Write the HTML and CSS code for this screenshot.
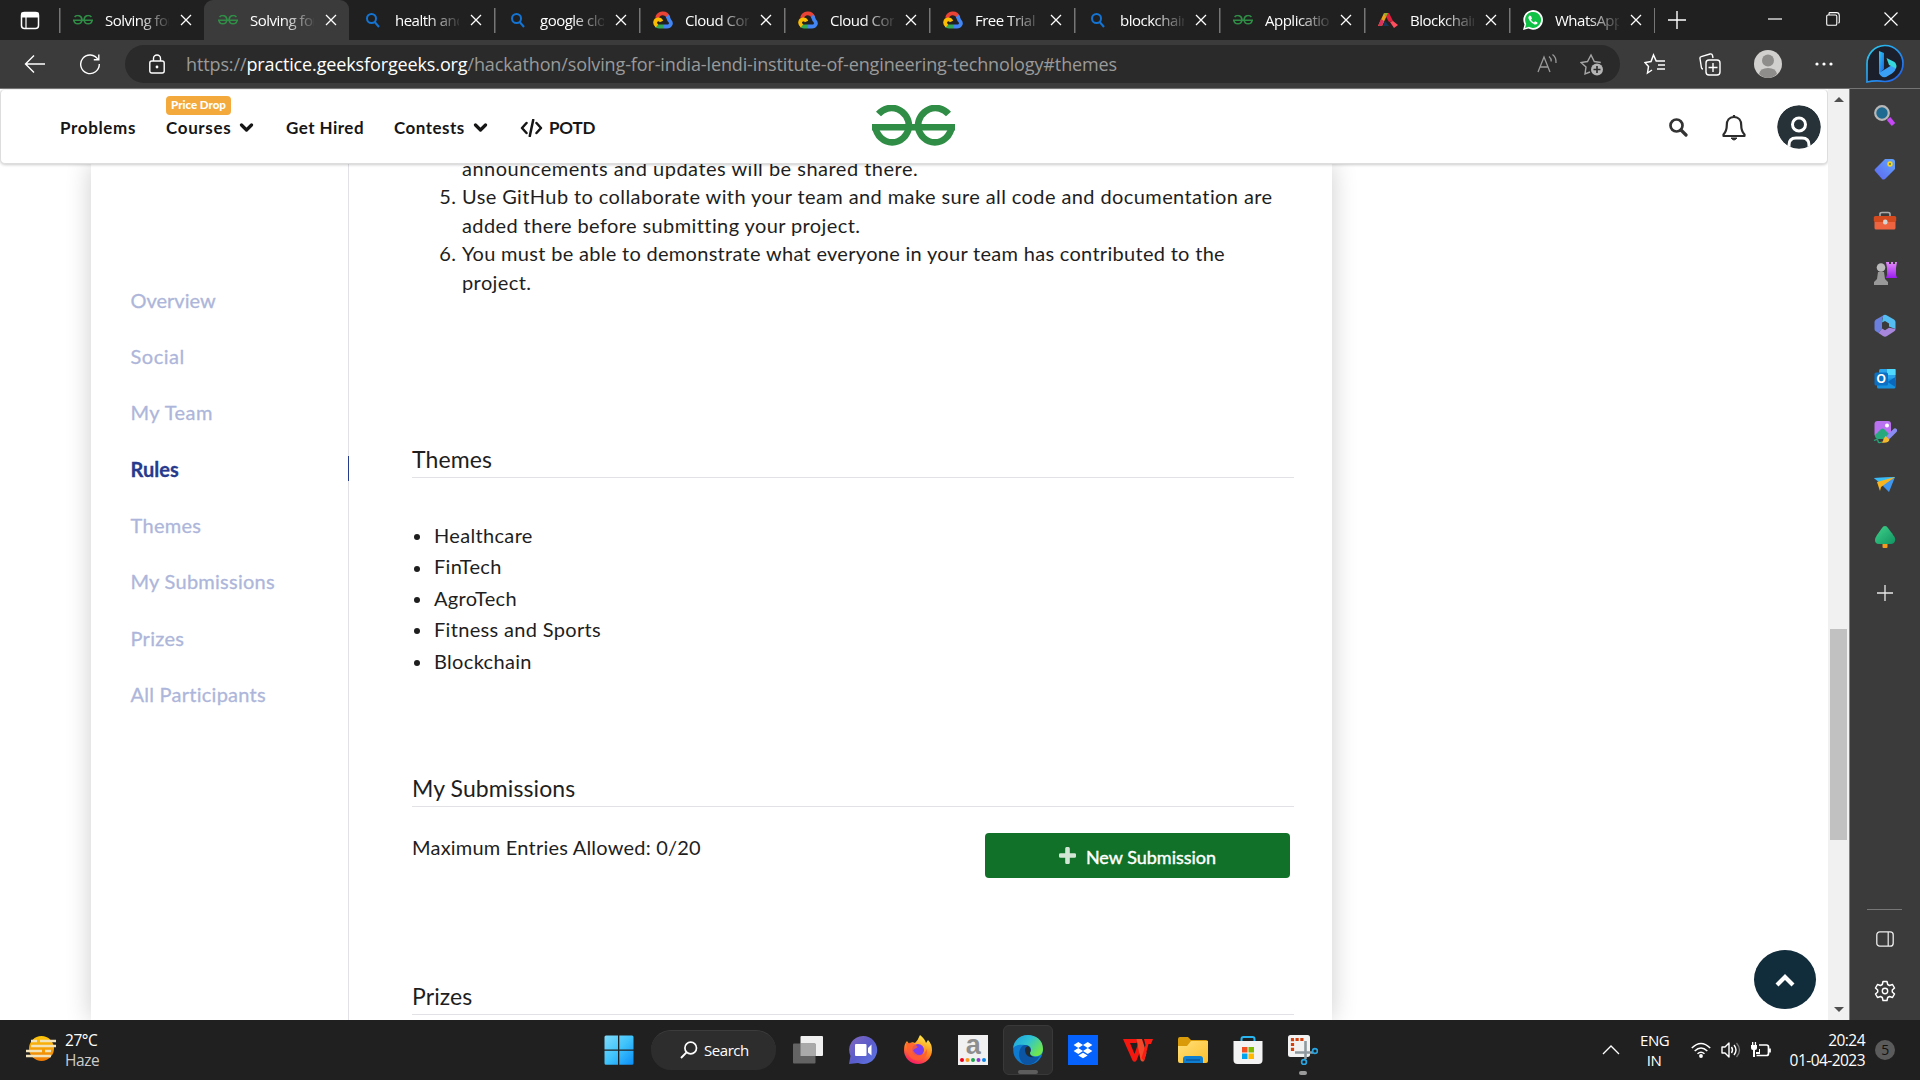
FILE: index.html
```html
<!DOCTYPE html>
<html lang="en">
<head>
<meta charset="utf-8">
<title>Solving for India</title>
<link rel="stylesheet" href="styles.css">
</head>
<body>
<svg class="defs" width="0" height="0" aria-hidden="true">
  <defs>
    <linearGradient id="gWin" x1="0" y1="0" x2="1" y2="1"><stop offset="0" stop-color="#7fdcfb"/><stop offset=".5" stop-color="#3fc3fb"/><stop offset="1" stop-color="#0a8df5"/></linearGradient>
    <linearGradient id="gSun" x1="0" y1="0" x2="0" y2="1"><stop offset="0" stop-color="#fdc60a"/><stop offset="1" stop-color="#ee7a05"/></linearGradient>
    <linearGradient id="gPurple" x1="0" y1="0" x2="0" y2="1"><stop offset="0" stop-color="#e58bfa"/><stop offset="1" stop-color="#9a1cf0"/></linearGradient>
    <linearGradient id="gBing" x1="0" y1="0" x2="1" y2="1"><stop offset="0" stop-color="#2ad0f0"/><stop offset="1" stop-color="#2158e8"/></linearGradient>
    <linearGradient id="gTag" x1="1" y1="0" x2="0" y2="1"><stop offset="0" stop-color="#62a6fb"/><stop offset="1" stop-color="#5d66f2"/></linearGradient>
    <linearGradient id="gTree" x1="0" y1="0" x2="1" y2="1"><stop offset="0" stop-color="#40d38b"/><stop offset="1" stop-color="#119462"/></linearGradient>
    <linearGradient id="gEdgeTop" x1="0" y1="0" x2="1" y2=".6"><stop offset="0" stop-color="#1d9fe0"/><stop offset=".5" stop-color="#2fc3d3"/><stop offset="1" stop-color="#70e64c"/></linearGradient>
    <linearGradient id="gFolder" x1="0" y1="0" x2="1" y2="1"><stop offset="0" stop-color="#ffe07a"/><stop offset="1" stop-color="#fcbf2c"/></linearGradient>
    <linearGradient id="gFox" x1=".7" y1="0" x2=".3" y2="1"><stop offset="0" stop-color="#fff04a"/><stop offset=".5" stop-color="#ff8a1c"/><stop offset="1" stop-color="#f5156c"/></linearGradient>
    <linearGradient id="gChat" x1="0" y1="0" x2="1" y2="1"><stop offset="0" stop-color="#8568bd"/><stop offset=".5" stop-color="#5a5ccb"/><stop offset="1" stop-color="#5f78e6"/></linearGradient>
    <symbol id="close" viewBox="0 0 12 12"><path d="M1 1l10 10M11 1L1 11" fill="none" stroke="#fff" stroke-width="1.3"/></symbol>
    <symbol id="gfg" viewBox="0 0 83 43"><g fill="none" stroke="#2f8d46" stroke-width="6.6"><path d="M76.500 9A17.500 18.300 0 0 0 46 21.500A17 18.300 0 0 0 79.700 21.500"/><path d="M6.500 9A17.500 18.300 0 0 1 37 21.500A17 18.300 0 0 1 3.300 21.500"/><path d="M0 22.300H83"/></g></symbol>
    <symbol id="find" viewBox="0 0 20 20"><g fill="none" stroke="#1474d4" stroke-width="2"><circle cx="8.500" cy="8.500" r="4.500"/><path d="M11.700 12l4.300 5"/></g></symbol>
    <symbol id="cloud" viewBox="0 0 20 17"><g fill="none" stroke-width="3.800"><path d="M4 6.500C5.500 1 13 0 15.500 6" stroke="#ea4335"/><path d="M14 4.500C16 6 15.500 8 16.500 9C19.500 12 17 15 14 15H10" stroke="#4285f4"/><path d="M10 15H6C5 15 4 14.800 3.200 14" stroke="#34a853"/><path d="M4 14.500C1 12 1.800 8.500 5 8C7 7.600 8 9 8.500 10" stroke="#fbbc04"/></g></symbol>
    <symbol id="chev" viewBox="0 0 14 10"><path d="M2 2l5 5 5-5" fill="none" stroke="#161616" stroke-width="3.200" stroke-linecap="round" stroke-linejoin="round"/></symbol>
  </defs>
</svg>

<header class="tabs">
  <div class="tab-actions"><svg width="20" height="20" viewBox="0 0 20 20"><rect x="1.500" y="2.500" width="17" height="16" rx="3" fill="none" stroke="#fff" stroke-width="1.500"/><path d="M2 3h16v4H2zM6 7v11" stroke="#fff" stroke-width="1.200" fill="#fff"/></svg></div>
  <div class="tab"><svg class="fav" viewBox="0 0 83 43"><use href="#gfg"/></svg><span class="title">Solving for</span><svg class="x"><use href="#close"/></svg></div>
  <div class="tab active"><svg class="fav" viewBox="0 0 83 43"><use href="#gfg"/></svg><span class="title">Solving for</span><svg class="x"><use href="#close"/></svg></div>
  <div class="tab"><svg class="fav"><use href="#find"/></svg><span class="title">health and</span><svg class="x"><use href="#close"/></svg></div>
  <div class="tab"><svg class="fav"><use href="#find"/></svg><span class="title">google clo</span><svg class="x"><use href="#close"/></svg></div>
  <div class="tab"><svg class="fav"><use href="#cloud"/></svg><span class="title">Cloud Con</span><svg class="x"><use href="#close"/></svg></div>
  <div class="tab"><svg class="fav"><use href="#cloud"/></svg><span class="title">Cloud Con</span><svg class="x"><use href="#close"/></svg></div>
  <div class="tab"><svg class="fav"><use href="#cloud"/></svg><span class="title">Free Trial a</span><svg class="x"><use href="#close"/></svg></div>
  <div class="tab"><svg class="fav"><use href="#find"/></svg><span class="title">blockchain</span><svg class="x"><use href="#close"/></svg></div>
  <div class="tab"><svg class="fav" viewBox="0 0 83 43"><use href="#gfg"/></svg><span class="title">Application</span><svg class="x"><use href="#close"/></svg></div>
  <div class="tab"><svg class="fav" viewBox="0 0 20 18"><path d="M0 15L6 2h4L4 15z" fill="#e8a31c"/><path d="M0 15l3-7 3 2-2 5z" fill="#d9305c"/><path d="M6 2h5l4 8-4 1z" fill="#e01f3c"/><path d="M6 2h4l-2 4z" fill="#7dbb2c"/><path d="M7 10l4 5H5z" fill="#17365c"/><path d="M12 11l3-1 5 4-4 3z" fill="#ff4f5e"/></svg><span class="title">Blockchain</span><svg class="x"><use href="#close"/></svg></div>
  <div class="tab"><svg class="fav" viewBox="0 0 20 20"><path d="M0 20l1.500-5.500A9.800 9.800 0 1 1 5.500 18.500z" fill="#fff"/><path d="M2 18l1.200-4A8 8 0 1 1 6 16.800z" fill="#0fc144"/><path d="M6.500 5.500c-2 2-1 4 1.500 6.500s5 3.500 6.500 1.500l-.2-1.300-2.300-1-1 1.200c-1.300-.5-2.500-1.700-3-3l1-1-1-2.500z" fill="#fff"/></svg><span class="title">WhatsApp</span><svg class="x"><use href="#close"/></svg></div>
  <div class="newtab"><svg width="18" height="18" viewBox="0 0 18 18"><path d="M9 0v18M0 9h18" stroke="#fff" stroke-width="1.400"/></svg></div>
  <div class="winctl">
    <svg width="14" height="14" viewBox="0 0 14 14"><path d="M0 7h14" stroke="#fff" stroke-width="1.200"/></svg>
    <svg width="14" height="14" viewBox="0 0 14 14"><path d="M3 3V1.500Q3 .6 4 .6h6.500Q13.300.6 13.300 3.500V10q0 1-1 1M2 3h7.500q1.300 0 1.300 1.300V12q0 1.300-1.300 1.300H2Q.7 13.300.7 12V4.300Q.7 3 2 3z" fill="none" stroke="#fff" stroke-width="1.100"/></svg>
    <svg width="14" height="14" viewBox="0 0 14 14"><path d="M.5.5l13 13M13.500.5l-13 13" stroke="#fff" stroke-width="1.200"/></svg>
  </div>
</header>

<div class="toolbar">
  <svg class="back" width="22" height="20" viewBox="0 0 22 20"><path d="M21 10H2M10 1.500L1.500 10l8.500 8.500" fill="none" stroke="#fff" stroke-width="1.400"/></svg>
  <svg class="reload" width="22" height="22" viewBox="0 0 22 22"><path d="M19 6.500A9.300 9.300 0 1 0 20.300 11M19.800 1.500v5.200h-5" fill="none" stroke="#fff" stroke-width="1.400"/></svg>
  <div class="address">
    <svg class="lock" width="16" height="20" viewBox="0 0 16 20"><path d="M4.500 7V4.500a3.500 3.500 0 0 1 7 0V7" fill="none" stroke="#fff" stroke-width="1.400"/><rect x=".8" y="7" width="14.400" height="12" rx="2" fill="none" stroke="#fff" stroke-width="1.400"/><circle cx="8" cy="13" r="1.400" fill="#fff"/></svg>
    <div class="url">https://<b>practice.geeksforgeeks.org</b>/hackathon/solving-for-india-lendi-institute-of-engineering-technology#themes</div>
    <svg class="aloud" width="22" height="22" viewBox="0 0 22 22"><path d="M2 19L8 4l6 15M4 14h8M13 3.500q2.500 2 2.200 5M16.500 1.500q4 3 3.500 8.500" fill="none" stroke="#9a9a9a" stroke-width="1.300"/></svg>
    <svg class="star" width="24" height="24" viewBox="0 0 24 24"><path d="M10 20l-5 2 1-7-5-4.500 6.500-1L11 3l3.300 6.500 6.500 1" fill="none" stroke="#a5a5a5" stroke-width="1.400"/><circle cx="17" cy="17.500" r="6" fill="#b4b4b4"/><path d="M17 14v7M13.500 17.500h7" stroke="#2b2b2b" stroke-width="1.600"/></svg>
  </div>
  <div class="tools">
    <svg width="22" height="22" viewBox="0 0 22 22"><path d="M8 17l-4.500 3 1-6.500L1 9.500l6-1L9.500 2l2.700 6H21M14 12h7M13 16h8" fill="none" stroke="#fff" stroke-width="1.500"/></svg>
    <svg width="22" height="24" viewBox="0 0 22 24"><path d="M4 17q-1.300 0-1.600-1.500L1 6.500Q.7 5 2.200 4.600L11 2q2-.5 2.500 1.500L14 6" fill="none" stroke="#fff" stroke-width="1.400"/><rect x="7" y="8" width="14" height="15" rx="3" fill="none" stroke="#fff" stroke-width="1.400"/><path d="M14 11v9M9.500 15.500h9" stroke="#fff" stroke-width="1.400"/></svg>
    <svg width="28" height="28" viewBox="0 0 28 28"><circle cx="14" cy="14" r="14" fill="#d2d0ce"/><circle cx="14" cy="10.500" r="6" fill="#8f8d8b"/><path d="M5 24q1-6 9-6t9 6q-4 4-9 4t-9-4z" fill="#8f8d8b"/></svg>
    <svg width="18" height="6" viewBox="0 0 18 6"><circle cx="2" cy="3" r="1.600" fill="#fff"/><circle cx="9" cy="3" r="1.600" fill="#fff"/><circle cx="16" cy="3" r="1.600" fill="#fff"/></svg>
  </div>
  <svg class="bing" width="40" height="40" viewBox="0 0 40 40"><path d="M2 38V20A18 18 0 1 1 20 37.500Q10 36 2 38z" fill="#1b1f2b" stroke="url(#gBing)" stroke-width="1.700"/><path d="M14 7l5 2v16l-5 5z" fill="url(#gBing)"/><path d="M14 29l13-8 4 3q-1 4-4 5.500l-6 3.500q-5 1-7-4z" fill="#3aa0f6"/><path d="M21.500 14l8 4q3 3 1.500 6.500L24 21z" fill="#35d8dc"/></svg>
</div>

<div class="middle">
  <main class="page">
    <nav class="site">
      <div class="links">
        <a class="n1">Problems</a>
        <a class="n2"><span class="badge">Price Drop</span><span class="lbl">Courses</span><svg width="15" height="10"><use href="#chev"/></svg></a>
        <a class="n3">Get Hired</a>
        <a class="n4"><span class="lbl">Contests</span><svg width="15" height="10"><use href="#chev"/></svg></a>
        <a class="n5"><svg width="23" height="18" viewBox="0 0 23 18"><path d="M6.500 4L2 9l4.500 5M16.500 4L21 9l-4.500 5M13.200 1L9.800 17" fill="none" stroke="#161616" stroke-width="2.500" stroke-linecap="round" stroke-linejoin="round"/></svg>POTD</a>
      </div>
      <svg class="logo" width="83" height="43"><use href="#gfg"/></svg>
      <div class="user">
        <svg width="19" height="19" viewBox="0 0 19 19"><circle cx="7.500" cy="7.500" r="6" fill="none" stroke="#333" stroke-width="2.700"/><path d="M12 12l5 5" stroke="#333" stroke-width="3.200" stroke-linecap="round"/></svg>
        <svg width="24" height="27" viewBox="0 0 24 27"><path d="M12 1v2M12 3C7 3 4.800 7 4.800 11c0 5-1 7-3.300 9.500V22h21v-1.500C20 18 19.200 16 19.200 11c0-4-2.200-8-7.200-8z" fill="none" stroke="#2c2c2c" stroke-width="2.200" stroke-linejoin="round"/><path d="M9 24q3 4 6 0z" fill="#2c2c2c" stroke="#2c2c2c" stroke-width="1"/></svg>
        <svg width="44" height="44" viewBox="0 0 44 44"><clipPath id="avc"><circle cx="22" cy="22" r="21.800"/></clipPath><g clip-path="url(#avc)"><circle cx="22" cy="22" r="22" fill="#263238"/><circle cx="22" cy="19.500" r="6.500" fill="none" stroke="#fff" stroke-width="3"/><path d="M12 44v-4q0-7 7-7h6q7 0 7 7v4" fill="none" stroke="#fff" stroke-width="3"/></g></svg>
      </div>
    </nav>
    <div class="card">
      <aside class="menu">
        <a>Overview</a><a class="social">Social</a><a class="team">My Team</a><a class="current">Rules</a><a class="th">Themes</a><a class="sub">My Submissions</a><a class="pr">Prizes</a><a class="all">All Participants</a>
      </aside>
      <section class="body">
        <ol class="rules" start="4">
          <li class="partial"><span class="r4">announcements and updates will be shared there.</span></li>
          <li>Use GitHub to collaborate with your team and make sure all code and documentation are<br>added there before submitting your project.</li>
          <li><span class="r6">You must be able to demonstrate what everyone in your team has contributed to the</span><br>project.</li>
        </ol>
        <h2 class="h-themes">Themes</h2>
        <ul class="themes"><li>Healthcare</li><li>FinTech</li><li>AgroTech</li><li>Fitness and Sports</li><li>Blockchain</li></ul>
        <h2 class="h-sub">My Submissions</h2>
        <div class="entries">
          <p>Maximum Entries Allowed: 0/20</p>
          <button><svg width="17" height="17" viewBox="0 0 17 17"><path d="M6.200 1.500Q6.200 0 7.500 0h2q1.300 0 1.300 1.500v4.700h4.700q1.500 0 1.500 1.300v2q0 1.300-1.500 1.300h-4.700v4.700q0 1.500-1.300 1.500h-2q-1.300 0-1.300-1.500v-4.700H1.500Q0 10.800 0 9.500v-2q0-1.300 1.500-1.300h4.700z" fill="#d3e6d6"/></svg><span>New Submission</span></button>
        </div>
        <h2 class="h-prizes">Prizes</h2>
      </section>
    </div>
    <button class="totop"><svg width="20" height="14" viewBox="0 0 20 14"><path d="M2 12l8-8 8 8" fill="none" stroke="#fff" stroke-width="4.200"/></svg></button>
  </main>
  <div class="scroll"><i class="up"></i><i class="thumb"></i><i class="down"></i></div>
  <aside class="edgebar">
    <svg width="24" height="24" viewBox="0 0 24 24"><path d="M15.500 14.500l5 6" stroke="#c547f5" stroke-width="4.500"/><circle cx="9" cy="9" r="6.800" fill="#1f6a90" stroke="#b8b8b8" stroke-width="2.200"/></svg>
    <svg width="24" height="24" viewBox="0 0 24 24"><path d="M12 2h7q3 0 3 3v7L12 22q-2 1-3 0l-7-8q-1-1 0-2z" fill="url(#gTag)"/><circle cx="17" cy="7" r="1.800" fill="#473" stroke="#f7d51c" stroke-width="1.800"/></svg>
    <svg width="24" height="24" viewBox="0 0 24 24"><path d="M7 7V5q0-1.500 2-1.500h6q2 0 2 1.500v2" fill="none" stroke="#aaa" stroke-width="1.600"/><rect x="1.500" y="12" width="21" height="8.500" rx="1.500" fill="#ee6440"/><rect x=".8" y="7" width="22.400" height="6" rx="1.500" fill="#d24a1e"/><rect x="10" y="10.500" width="4.500" height="5" rx="2" fill="#d5d5d5"/></svg>
    <svg width="24" height="24" viewBox="0 0 24 24"><path d="M13 0h3v2h2V0h2v2h2V0h2l-1 6v7l1 3H13l1-3V6z" fill="url(#gPurple)"/><circle cx="8" cy="5.500" r="4.300" fill="#bababa"/><path d="M5 10h6l1 7 3 3v3H1v-3l3-3z" fill="#999"/></svg>
    <svg width="24" height="24" viewBox="0 0 24 24"><path d="M10 1.500q2-1.300 4 0L21 5.500q1.500 1 1.500 2.500v7L16 12.500V9.500L12 7l-3 1.500z" fill="#54bdf2"/><path d="M11 1L9 5v9.500L5.500 19 2.500 17q-1-.7-1-2V8q0-1.500 1.500-2.500z" fill="#6b80dc"/><path d="M5.500 19L9 14.500l3 1.700 4-2.500 6.500 1.300q0 1.500-1.500 2.500L14 22q-2 1.300-4 0z" fill="#a886dc"/></svg>
    <svg width="24" height="24" viewBox="0 0 24 24"><rect x="6" y="2" width="16.500" height="12" rx="1.500" fill="#2ba3ea"/><path d="M14 2h8.500v6H14z" fill="#50d9ff"/><path d="M4 13l18.500-2v9q0 1.500-1.500 1.500H5.500Q4 21.500 4 20z" fill="#1691df"/><path d="M22.500 10v10l-8-5z" fill="#0968bb"/><rect x="1.500" y="5.500" width="13.500" height="13" rx="1.500" fill="#0b70c4"/><text x="8.200" y="16" class="o">O</text></svg>
    <svg width="24" height="24" viewBox="0 0 24 24"><rect x="1.500" y="1" width="16.500" height="16" rx="3" fill="#bb72f0"/><path d="M2 15l6-6q1.500-1 3 0l6 6-3 4H5q-3 0-3-4z" fill="#27a97d"/><circle cx="14" cy="5.500" r="2" fill="#fff"/><path d="M1 20.500q4-2 4 .5t4 1" fill="none" stroke="#27a97d" stroke-width="1.300"/><path d="M22 10.500L15.500 17" stroke="#8b8df5" stroke-width="4.200" stroke-linecap="round"/><path d="M12.500 16l4 3.500q-1 4-8 3 2-1 2-3.500z" fill="#f5ba2c"/></svg>
    <svg width="24" height="24" viewBox="0 0 24 24"><path d="M1 6l21-1-6 15-6-6z" fill="#4196f0"/><path d="M1 6l21-1L9 12z" fill="#39bdf3"/><path d="M4 10l18-5L8 15l-1 4z" fill="#fab51e"/></svg>
    <svg width="24" height="24" viewBox="0 0 24 24"><rect x="9.500" y="16" width="5" height="7" rx="1" fill="#f39a1f"/><path d="M12 1q2 0 3 2l3 4q2 2 2 3 3 3 2 6-1 3-4 3H6q-4 0-4-4 0-2 2-5l5-7q1-2 3-2z" fill="url(#gTree)"/></svg>
    <svg class="add" width="16" height="16" viewBox="0 0 16 16"><path d="M8 0v16M0 8h16" stroke="#e8e8e8" stroke-width="1.300"/></svg>
    <hr>
    <svg class="panel" width="18" height="16" viewBox="0 0 18 16"><rect x=".8" y=".8" width="16.400" height="14.400" rx="3" fill="none" stroke="#eee" stroke-width="1.300"/><path d="M12.200 1v14" stroke="#eee" stroke-width="1.200"/></svg>
    <svg class="gear" width="22" height="22" viewBox="0 0 22 22"><path d="M9 1.500h4l.7 3 1.800 1 3-1 2 3.500-2.200 2v2l2.200 2-2 3.500-3-1-1.800 1-.7 3H9l-.7-3-1.800-1-3 1-2-3.500 2.200-2v-2L1.500 8l2-3.500 3 1 1.800-1z" fill="none" stroke="#fff" stroke-width="1.500" stroke-linejoin="round"/><circle cx="11" cy="11" r="2.700" fill="none" stroke="#fff" stroke-width="1.400"/></svg>
  </aside>
</div>

<footer class="taskbar">
  <div class="weather">
    <svg width="31" height="30" viewBox="0 0 31 30"><circle cx="15.500" cy="14.500" r="12.500" fill="url(#gSun)"/><g stroke="#f3e3ba" stroke-width="2.300"><path d="M5 7h6M14 7h16M5 12h25M0 17h16M19 17h6M0 22h25"/></g></svg>
    <div><b>27°C</b><span>Haze</span></div>
  </div>
  <div class="apps">
    <svg width="30" height="30" viewBox="0 0 30 30"><path d="M.5 2q0-1.500 1.500-1.500h12v14H.5zM15.300.5h12.700q1.500 0 1.500 1.500v12.500H15.300zM.5 15.700h13.500v14H2q-1.500 0-1.500-1.500zM15.300 15.700h14.200v12.500q0 1.500-1.500 1.500H15.300z" fill="url(#gWin)"/></svg>
    <div class="search"><svg width="18" height="18" viewBox="0 0 18 18"><circle cx="10.700" cy="7" r="5.800" fill="none" stroke="#fff" stroke-width="1.700"/><path d="M6.500 11.300L1 17" stroke="#fff" stroke-width="1.900"/></svg><span>Search</span></div>
    <svg width="30" height="30" viewBox="0 0 30 30"><rect x="7.500" y="1" width="22.500" height="20" rx="1" fill="#f0f0f0"/><rect x="0" y="8.500" width="22.500" height="20" rx="1" fill="#636363"/><rect x="7.500" y="8.500" width="15" height="12.500" fill="#aaa"/></svg>
    <svg width="30" height="30" viewBox="0 0 30 30"><path d="M15 1a14 14 0 1 1-5 27L1 29l1.500-8A14 14 0 0 1 15 1z" fill="url(#gChat)"/><rect x="7" y="9" width="11.500" height="12" rx="1" fill="#fff"/><path d="M20 13l3.500-3.500v11L20 17.500z" fill="#fff"/></svg>
    <svg width="30" height="30" viewBox="0 0 30 30"><path d="M15 29A14 14 0 0 1 1 15q0-6 3-9l2 3q3-3 6-1Q15 5 17 0q5 4 6 8l2-3q4 4 4 10a14 14 0 0 1-14 14z" fill="url(#gFox)"/><circle cx="15" cy="15" r="6" fill="#7a3df0"/><path d="M3 8q6-1 9 1l3 3-5 3q2 5 7 5 5-1 7-6 1 8-6 11-9 2-13-6z" fill="#ff5c32" opacity=".8"/></svg>
    <svg width="30" height="30" viewBox="0 0 30 30"><rect width="30" height="30" fill="#f1f1f1"/><text x="15" y="18.500" class="a">a</text><circle cx="4" cy="25" r="2" fill="#f00016"/><circle cx="9.500" cy="25" r="2" fill="#ff9a1a"/><circle cx="15" cy="25" r="2" fill="#19a64b"/><circle cx="20.500" cy="25" r="2" fill="#8f38cf"/><circle cx="26" cy="25" r="2" fill="#0785e8"/></svg>
    <div class="app on"><svg width="30" height="30" viewBox="0 0 30 30"><circle cx="15" cy="15" r="14.800" fill="#0e7ad0"/><path d="M0 14C1-5 30-4 30 14c0 6-5 8-9 7-3 0-5-2-4-4 2-2 1-7-5-7C5 9 1 11 0 14z" fill="url(#gEdgeTop)"/><path d="M12 10c5 0 7 4 5 7-1 3 2 5 5 5q3 0 5-1-5 9-14 8.800C3 26 5 11 12 10z" fill="#0c55a4"/><path d="M15 11q-5 2-2 8 3 4 8 3-4-1-4-4 2-4-2-7z" fill="#232b30"/></svg></div>
    <svg width="30" height="30" viewBox="0 0 30 30"><rect width="30" height="30" fill="#0562fc"/><path d="M10.300 7l4.700 3-4.700 3-4.700-3zM19.700 7l4.700 3-4.700 3-4.700-3zM10.300 13l4.700 3-4.700 3-4.700-3zM19.700 13l4.700 3-4.700 3-4.700-3zM15 17.700l4.700 2.800-4.700 2.800-4.700-2.800z" fill="#fff"/></svg>
    <svg width="30" height="30" viewBox="0 0 30 30"><path d="M0 4h15l-1.500 4H7l4.500 11L15 9l3.500 4-5 12.500q-2 2.500-4 0z" fill="#f3170f"/><path d="M13.500 4h5.500l4.500 14-2.500 8q-2 1.500-3.500-1z" fill="#f4482a"/><path d="M21 4h9l-2 5h-2.500L21 26l-2.500-3 4-13z" fill="#fb1d12"/></svg>
    <svg width="30" height="30" viewBox="0 0 30 30"><path d="M0 4q0-2 2-2h8l3 3h15q2 0 2 2v6H0z" fill="#d99b0a"/><path d="M0 11h9l4-5h17v20q0 2-2 2H2q-2 0-2-2z" fill="url(#gFolder)"/><path d="M5 28v-4q0-3 3-3h14q3 0 3 3v4z" fill="#0f7fd2"/><path d="M8 25h14" stroke="#0a4e8f" stroke-width="1.200"/></svg>
    <svg width="30" height="30" viewBox="0 0 30 30"><path d="M8.500 7V4q0-2 2-2h9q2 0 2 2v3" fill="none" stroke="#29b5ef" stroke-width="2"/><path d="M.5 6h29v19q0 4-4 4h-21q-4 0-4-4z" fill="#f3f3f3"/><path d="M9 12h5.500v5.500H9z" fill="#f25022"/><path d="M15.500 12H21v5.500h-5.500z" fill="#7fba00"/><path d="M9 18.500h5.500V24H9z" fill="#00a4ef"/><path d="M15.500 18.500H21V24h-5.500z" fill="#ffb900"/></svg>
    <div class="app snip"><svg width="30" height="30" viewBox="0 0 30 30"><rect width="22" height="22" rx="2.500" fill="#f2f2f2"/><path d="M15.500 4.500h-11v12" fill="none" stroke="#d43f0c" stroke-width="3.200" stroke-dasharray="3.200 1.600"/><path d="M17.500 6v18M7 17.500h18" stroke="#8e999f" stroke-width="2.600"/><circle cx="27" cy="16" r="2.400" fill="none" stroke="#27a5e2" stroke-width="1.700"/><circle cx="16" cy="27" r="2.400" fill="none" stroke="#27a5e2" stroke-width="1.700"/></svg></div>
  </div>
  <div class="tray">
    <svg class="more" width="18" height="10" viewBox="0 0 18 10"><path d="M1 9l8-8 8 8" fill="none" stroke="#fff" stroke-width="1.300"/></svg>
    <div class="lang"><span>ENG</span><span>IN</span></div>
    <svg class="wifi" width="20" height="16" viewBox="0 0 20 16"><path d="M.8 6q9.200-9 18.400 0M3.700 9q6.300-6 12.600 0M6.500 11.800q3.500-3.200 7 0" fill="none" stroke="#fff" stroke-width="1.500"/><circle cx="10" cy="14" r="1.900" fill="#fff"/></svg>
    <svg class="snd" width="20" height="18" viewBox="0 0 20 18"><path d="M1 6h3l4-4v14l-4-4H1z" fill="none" stroke="#fff" stroke-width="1.400" stroke-linejoin="round"/><path d="M10.500 6q2 3 0 6M13 4q4 5 0 10" fill="none" stroke="#fff" stroke-width="1.400"/><path d="M15.500 2q6 7 0 14" fill="none" stroke="#777" stroke-width="1.300"/></svg>
    <svg class="bat" width="20" height="16" viewBox="0 0 20 16"><path d="M8 3h7.500q2 0 2 2v6.500q0 2-2 2H5.500M19 6.500v4" fill="none" stroke="#fff" stroke-width="1.700"/><path d="M0 3h6v3q0 2-2 2v7H2V8Q0 8 0 6zM1 0h1.300v3H1zM3.800 0h1.300v3H3.800zM8 7h1v5H5v-2h3z" fill="#fff"/></svg>
    <div class="clock"><span>20:24</span><span>01-04-2023</span></div>
    <div class="count">5</div>
  </div>
</footer>
</body>
</html>
```
FILE: styles.css
```css
* { box-sizing: border-box; }
html, body { margin: 0; }
body { width: 1920px; height: 1080px; overflow: hidden; display: grid; grid-template-rows: 40px 49px 931px 60px; background: #fff; font-family: Lato, "Open Sans", sans-serif; }
svg { display: block; flex: none; }
.defs { position: absolute; }

.tabs { display: flex; background: #202020; color: #fff; font-family: "Open Sans", "Noto Sans", sans-serif; }
.tab-actions { width: 59px; padding: 10px 0 0 20px; }
.tab { width: 145px; height: 40px; display: flex; align-items: center; padding-left: 14px; background: linear-gradient(#767676, #767676) 0 8px / 1.500px 25px no-repeat; }
.tab .fav { width: 20px; height: 20px; }
.tab .title { width: 64px; margin-left: 12px; font-size: 15px; line-height: 20px; letter-spacing: -0.500px; white-space: nowrap; overflow: hidden; -webkit-mask-image: linear-gradient(90deg, #000 50%, rgba(0,0,0,.1)); mask-image: linear-gradient(90deg, #000 50%, rgba(0,0,0,.1)); }
.tab .x { width: 12px; height: 12px; margin-left: 11px; }
.tab.active, .tab.active + .tab { background: none; }
.tab.active { background: #3b3b3b; border-radius: 9px 9px 0 0; }
.newtab { width: 96px; padding: 3px 0 0 13px; border-left: 1.500px solid #767676; height: 25px; margin-top: 8px; }
.winctl { display: flex; gap: 44px; padding: 12px 0 0 18px; }

.toolbar { display: flex; align-items: center; background: #3b3b3b; padding: 0 14px 0 24px; border-bottom: 1px solid #747474; }
.reload { margin-left: 33px; }
.address { flex: none; width: 1495px; height: 38px; margin-left: 24px; display: flex; align-items: center; background: #2a2a2a; border-radius: 19px; padding-left: 24px; }
.url { flex: none; width: 1330px; margin-left: 21px; color: #9a9a9a; font: 18px/26px "Open Sans", "Noto Sans", sans-serif; letter-spacing: -0.127px; white-space: nowrap; }
.url b { font-weight: 400; color: #fff; }
.aloud { margin-left: 20px; }
.star { margin-left: 22px; }
.tools { display: flex; align-items: center; gap: 33px; margin-left: 24px; }
.bing { flex: none; margin-left: 32px; }

.middle { display: grid; grid-template-columns: 1828px 22px 70px; min-height: 0; }
.page { position: relative; overflow: hidden; display: flex; flex-direction: column; color: #1e1e1e; }
.site { position: relative; z-index: 2; flex: none; height: 75px; display: flex; align-items: flex-start; background: #fff; border: 1px solid #ddd; border-top-color: #eee; border-radius: 5px; box-shadow: 0 1px 3px rgba(0,0,0,.2); font-weight: 700; font-size: 17px; color: #161616; }
.links { width: 871px; display: flex; padding: 26px 0 0 59px; line-height: 24px; }
.links a { position: relative; display: flex; align-items: center; white-space: nowrap; }
.n1 { width: 106px; letter-spacing: .650px; }
.n2 { width: 120px; letter-spacing: .650px; }
.n3 { width: 108px; letter-spacing: .470px; }
.n4 { width: 126px; letter-spacing: .480px; }
.n5 { letter-spacing: -0.200px; }
.n2 .lbl { width: 73px; }
.n4 .lbl { width: 79px; }
.n5 svg { margin-right: 6px; }
.badge { position: absolute; left: 0; top: -20px; width: 65px; height: 19px; border-radius: 4px; background: #f3a93c; color: #fff; font: 900 11.500px/18px Lato, sans-serif; text-align: center; letter-spacing: 0; }
.logo { margin-top: 15px; }
.user { display: flex; align-items: center; height: 44px; margin: 15px 0 0 714px; }
.user svg:nth-child(1) { margin-right: 34px; }
.user svg:nth-child(2) { margin-right: 31px; }

.card { flex: 1; min-height: 0; width: 1241px; margin-left: 91px; display: flex; box-shadow: 0 0 24px rgba(0,0,0,.2); }
.menu { width: 258px; padding: 123px 0 0 39.500px; border-right: 1px solid #e2e2e6; }
.menu a { display: flex; align-items: center; height: 25px; margin-bottom: 31.400px; font-size: 20px; font-weight: 400; color: #adb6da; -webkit-text-stroke: .3px currentColor; }
.menu .current { margin-right: -1px; border-right: 1px solid #273b8e; color: #273b8e; font-weight: 700; }
.menu .social, .menu .team { letter-spacing: .500px; }
.menu .th, .menu .pr { letter-spacing: .300px; }
.menu .sub, .menu .all { letter-spacing: .260px; }
.body { flex: 1; padding: 0 38px 0 63px; }
.body h2 { height: 40px; padding-top: 1px; font-size: 23px; line-height: 40px; font-weight: 400; letter-spacing: .1px; border-bottom: 1px solid #e2e2e6; }
.rules { margin: -10.500px 0 0; padding: 0 0 0 50px; font-size: 20px; line-height: 28.500px; white-space: nowrap; letter-spacing: .4px; }
.rules .partial { list-style: none; }
.r4 { letter-spacing: .490px; }
.r6 { letter-spacing: .3px; }
.body .h-themes { margin: 142px 0 0; }
.themes { list-style: none; margin: 42px 0 0; padding: 0; font-size: 20px; line-height: 31.400px; letter-spacing: .330px; }
.themes li { display: flex; align-items: center; }
.themes li::before { content: ""; width: 6px; height: 6px; margin: 3px 14px 0 2px; border-radius: 50%; background: #1e1e1e; }
.body .h-sub { margin: 90px 0 0; }
.entries { display: flex; justify-content: space-between; padding: 26px 4px 0 0; }
.entries p { margin: 2px 0 0; font-size: 20px; line-height: 24px; letter-spacing: .210px; }
.entries button { width: 305px; height: 45px; display: flex; align-items: center; justify-content: center; gap: 10px; border: 0; border-radius: 4px; background: #117128; color: #fff; font: 400 18px/24px Lato, sans-serif; letter-spacing: 0; -webkit-text-stroke: .4px currentColor; padding: 0; }
.entries button span { padding-top: 2px; }
.body .h-prizes { margin: 97px 0 0; }
.totop { position: absolute; left: 1754px; top: 861px; width: 62px; height: 59px; display: flex; align-items: center; justify-content: center; border: 0; border-radius: 50%; background: #112c3b; padding: 0; }

.scroll { display: flex; flex-direction: column; align-items: center; background: #f1f1f1; border-right: 1px solid #808080; }
.up, .down { width: 0; height: 0; border: 5px solid transparent; }
.up { margin-top: 4px; border-top-width: 4px; border-bottom-color: #505050; }
.thumb { width: 17px; height: 211px; margin-top: 527px; background: #c1c1c1; }
.down { margin-top: 167px; border-bottom-width: 4px; border-top-color: #505050; }

.edgebar { display: flex; flex-direction: column; align-items: center; background: #3b3b3b; padding: 15px 1px 0 0; }
.edgebar > svg:not(.add):not(.panel):not(.gear) { margin-bottom: 28.600px; }
.edgebar .add { margin-top: 8px; }
.edgebar hr { width: 35px; height: 1px; margin: 308px 0 0; border: 0; background: #777; }
.panel { margin-top: 21px; }
.gear { margin-top: 33px; }
.o { font: 700 12px "Liberation Sans", sans-serif; fill: #fff; text-anchor: middle; }
.a { font: 700 27px "Liberation Sans", sans-serif; fill: #8e8e8e; text-anchor: middle; }

.taskbar { display: flex; background: #202020; color: #fff; font: 15.500px/20px "Open Sans", "Noto Sans", sans-serif; letter-spacing: -0.450px; }
.weather { width: 604px; display: flex; gap: 8px; padding: 10px 0 0 26px; }
.weather svg { margin-top: 4px; }
.weather b, .weather span, .lang span, .clock span { display: block; font-weight: 400; }
.weather span { color: #ccc; }
.apps { display: flex; gap: 25px; align-items: center; }
.search { width: 125px; height: 40px; display: flex; align-items: center; gap: 6px; margin: 0 -8px; padding: 0 0 1px 29px; border-radius: 20px; background: #2d2d2d; border-top: 1px solid #3c3c3c; font-size: 15px; }
.app { position: relative; }
.app.on { width: 50px; height: 50px; padding: 9px; margin: 0 -10px; border: 1px solid #393939; border-radius: 6px; background: #2d2d2d; }
.app::after { content: ""; position: absolute; left: 14px; bottom: 0; width: 20px; height: 4px; border-radius: 2px; background: #5d5d5d; }
.snip::after { left: 11px; bottom: -10px; width: 8px; background: #9a9a9a; }
.tray { flex: 1; display: flex; align-items: center; padding-right: 25px; justify-content: flex-end; }
.lang { width: 28px; text-align: center; margin: 0 23px 0 20px; font-size: 15px; }
.snd, .bat { margin-left: 10px; }
.clock { width: 94px; white-space: nowrap; display: flex; flex-direction: column; align-items: flex-end; letter-spacing: -0.550px; }
.count { width: 20px; height: 20px; margin-left: 10px; border-radius: 50%; background: #5b5b5b; color: #111; text-align: center; font-size: 14px; }
```
